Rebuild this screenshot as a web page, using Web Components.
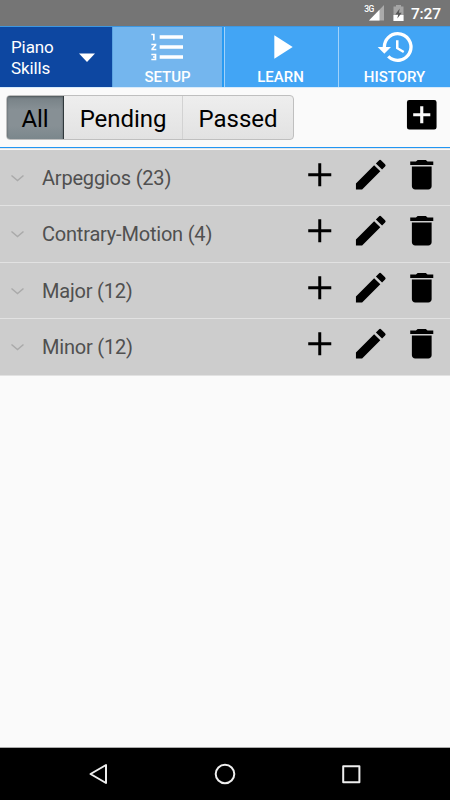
<!DOCTYPE html>
<html lang="en">
<head>
<meta charset="utf-8">
<meta name="viewport" content="width=device-width">
<title>Piano Skills</title>
<style>
  body {
    margin: 0;
    font-family: Roboto, sans-serif;
  }
</style>
</head>
<body>
<skills-app></skills-app>

<script>
const icons = {
  list: 'M2 17h2v.5H3v1h1v.5H2v1h3v-4H2v1zm1-9h1V4H2v1h1v3zm-1 3h1.800L2 13.100v.9h3v-1H3.200L5 10.900V10H2v1zm5-6v2h14V5H7zm0 14h14v-2H7v2zm0-6h14v-2H7v2z',
  play: 'M8 5v14l11-7z',
  history: 'M13 3a9 9 0 0 0-9 9H1l3.890 3.890.07.140L9 12H6a7 7 0 1 1 2.060 4.940l-1.420 1.420A9 9 0 1 0 13 3zm-1 5v5l4.280 2.540.720-1.210-3.500-2.080V8H12z',
  plus: 'M19 12.900h-6.100V19h-1.800v-6.100H5v-1.800h6.100V5h1.800v6.100H19z',
  pencil: 'M3 17.250V21h3.750L17.810 9.940l-3.750-3.750L3 17.250zM20.710 7.040a1 1 0 0 0 0-1.410l-2.340-2.340a1 1 0 0 0-1.410 0l-1.830 1.830 3.750 3.750 1.830-1.830z',
  trash: 'M6 19c0 1.100.9 2 2 2h8c1.100 0 2-.9 2-2V7H6v12zM19 4h-3.500l-1-1h-5l-1 1H5v2h14V4z',
  box: 'M19.600 3H4.400A1.400 1.400 0 0 0 3 4.400v15.200A1.400 1.400 0 0 0 4.400 21h15.200a1.400 1.400 0 0 0 1.400-1.400V4.400A1.400 1.400 0 0 0 19.600 3zm-2.400 9.950h-4.250v4.250h-1.900v-4.250H6.800v-1.900h4.250V6.800h1.900v4.250h4.250z'
}

class AppIcon extends HTMLElement {
  constructor () {
    super()
    this.attachShadow({ mode: 'open' })
  }

  connectedCallback () {
    this.shadowRoot.innerHTML = `
      <style>
        :host { display: block; width: 39.500px; height: 39.500px; flex: none; }
        svg { display: block; width: 100%; height: 100%; fill: currentColor; }
      </style>
      <svg viewBox="0 0 24 24"><path d="${icons[this.getAttribute('name')]}"/></svg>
    `
  }
}
customElements.define('app-icon', AppIcon)

class StatusBar extends HTMLElement {
  constructor () {
    super()
    this.attachShadow({ mode: 'open' }).innerHTML = `
      <style>
        :host {
          align-items: center;
          background: #757575;
          box-sizing: border-box;
          color: #fff;
          display: flex;
          height: 26px;
          justify-content: flex-end;
          padding-right: 9px;
        }
        .net { font-size: 8.500px; font-weight: 500; letter-spacing: -.5px; margin: -8px -5px 0 0; z-index: 1; }
        .signal { width: 15px; height: 16px; }
        .battery { width: 11px; height: 16px; margin: 0 7px 0 9px; }
        .time { font-size: 15.500px; font-weight: 500; letter-spacing: -.1px; line-height: 26px; margin-top: 2px; }
      </style>
      <span class="net">3G</span>
      <svg class="signal" viewBox="0 0 15 16">
        <path d="M15 0v15.500H0z" fill="#aaa"/>
        <path d="M10.500 4.700v10.800H0z" fill="#fff"/>
      </svg>
      <svg class="battery" viewBox="0 0 11 16">
        <path d="M3 0h5v1.500h2.500V16H.5V1.500H3z" fill="#a5a5a5"/>
        <path d="M.5 10h10v6H.5z" fill="#fff"/>
        <path d="M6.700 3.500 2.300 9.500h2.900L4.300 13.500 8.700 7.800H5.900z" fill="#555"/>
      </svg>
      <span class="time">7:27</span>
    `
  }
}
customElements.define('status-bar', StatusBar)

class NavTab extends HTMLElement {
  constructor () {
    super()
    this.attachShadow({ mode: 'open' })
  }

  connectedCallback () {
    this.shadowRoot.innerHTML = `
      <style>
        :host {
          align-items: center;
          background: #42a5f5;
          box-sizing: border-box;
          color: #fff;
          display: flex;
          flex-direction: column;
          font-size: 15px;
          font-weight: 500;
          line-height: 20px;
        }
        :host([active]) { background: #74b6ee; }
        app-icon { width: 40px; height: 40px; margin-top: -.5px; }
        :host([icon=history]) app-icon { margin-left: 2px; }
      </style>
      <app-icon name="${this.getAttribute('icon')}"></app-icon>
      <span><slot></slot></span>
    `
  }
}
customElements.define('nav-tab', NavTab)

class TopNav extends HTMLElement {
  constructor () {
    super()
    this.attachShadow({ mode: 'open' }).innerHTML = `
      <style>
        :host {
          background: #42a5f5;
          border-top: 1px solid #3f97df;
          box-sizing: border-box;
          display: grid;
          grid-template-columns: 112px 112px 114px 112px;
          height: 61px;
        }
        .course {
          align-items: center;
          background: #0d47a1;
          color: #fff;
          display: flex;
          font-size: 17px;
          justify-content: space-between;
          line-height: 20.500px;
          padding: 1px 16px 0 11px;
        }
        .course span { letter-spacing: -.1px; }
        .course svg { width: 18px; height: 10px; }
        nav-tab:nth-of-type(1) { border-left: 1px solid #5da4e1; border-right: 2px solid #279af2; }
        nav-tab:nth-of-type(2) { border-left: 1px solid #a1d2fa; padding-right: 2px; }
        nav-tab:nth-of-type(3) { border-left: 1px solid #a1d2fa; }
      </style>
      <div class="course">
        <span>Piano<br>Skills</span>
        <svg viewBox="0 0 18 10"><path d="M1 .5h16L9 9z" fill="#fff"/></svg>
      </div>
      <nav-tab icon="list" active>SETUP</nav-tab>
      <nav-tab icon="play">LEARN</nav-tab>
      <nav-tab icon="history">HISTORY</nav-tab>
    `
  }
}
customElements.define('top-nav', TopNav)

class FilterBar extends HTMLElement {
  constructor () {
    super()
    this.attachShadow({ mode: 'open' }).innerHTML = `
      <style>
        :host {
          align-items: flex-start;
          border-bottom: 1px solid #2196f3;
          border-top: 1px solid #d8ebfb;
          box-sizing: border-box;
          display: flex;
          height: 61px;
          justify-content: space-between;
          padding: 7px 9px 0 6px;
        }
        .group {
          background: linear-gradient(#eee, #e2e2e2);
          border: 1px solid #bfbfbf;
          border-radius: 4px;
          box-sizing: border-box;
          color: #000;
          display: grid;
          font-size: 24px;
          grid-template-columns: 57px 119px 110px;
          height: 45px;
          letter-spacing: -.05px;
          line-height: 46px;
          overflow: hidden;
          text-align: center;
          width: 288px;
        }
        .group span + span { border-right: 1px solid #d2d2d2; }
        .group span:last-child { border: 0; }
        .on {
          background: linear-gradient(#768085, #879095 30%, #879095 65%, #78858a);
          border-right: 1px solid #30383b;
          box-shadow: inset 0 1px 2px #4e5659;
        }
      </style>
      <div class="group"><span class="on">All</span><span>Pending</span><span>Passed</span></div>
      <app-icon name="box"></app-icon>
    `
  }
}
customElements.define('filter-bar', FilterBar)

class SkillRow extends HTMLElement {
  constructor () {
    super()
    this.attachShadow({ mode: 'open' }).innerHTML = `
      <style>
        :host {
          align-items: center;
          background: #cdcdcd;
          border-bottom: 1px solid #e2e2e2;
          box-sizing: border-box;
          color: #505050;
          display: flex;
          font-size: 20px;
          height: 56.500px;
          padding: 0 9px 0 10px;
        }
        .chevron { width: 15px; height: 8px; margin-top: 1px; }
        .label { flex: 1; letter-spacing: -.2px; padding: 1px 0 0 17px; }
        .actions { color: #000; display: flex; gap: 11.200px; margin-top: -6px; }
      </style>
      <svg class="chevron" viewBox="0 0 15 8"><path d="M1.500 1.500 7.500 6.500l6-5" fill="none" stroke="#aaa" stroke-width="1.500"/></svg>
      <span class="label"><slot></slot></span>
      <div class="actions">
        <app-icon name="plus"></app-icon>
        <app-icon name="pencil"></app-icon>
        <app-icon name="trash"></app-icon>
      </div>
    `
  }
}
customElements.define('skill-row', SkillRow)

class SystemNav extends HTMLElement {
  constructor () {
    super()
    this.attachShadow({ mode: 'open' }).innerHTML = `
      <style>
        :host {
          align-items: center;
          background: #000;
          border-top: 1px solid #aaa;
          box-sizing: border-box;
          display: flex;
          height: 53px;
          justify-content: space-between;
          padding: 0 87px;
        }
        svg { width: 24px; height: 24px; fill: none; stroke: #eee; stroke-width: 2; stroke-linejoin: round; }
      </style>
      <svg viewBox="0 0 24 24"><path d="M19 3v18L3.500 12z"/></svg>
      <svg viewBox="0 0 24 24"><circle cx="12" cy="12" r="9.300"/></svg>
      <svg viewBox="0 0 24 24"><path d="M4.200 4.200h16.200v16H4.200z"/></svg>
    `
  }
}
customElements.define('system-nav', SystemNav)

class SkillsApp extends HTMLElement {
  constructor () {
    super()
    this.attachShadow({ mode: 'open' }).innerHTML = `
      <style>
        :host {
          background: #fafafa;
          display: flex;
          flex-direction: column;
          height: 800px;
          overflow: hidden;
          width: 450px;
        }
        main { border-top: 1px solid #e5e5e5; flex: 1; padding-top: .5px; }
      </style>
      <status-bar></status-bar>
      <top-nav></top-nav>
      <filter-bar></filter-bar>
      <main>
        <skill-row>Arpeggios (23)</skill-row>
        <skill-row>Contrary-Motion (4)</skill-row>
        <skill-row>Major (12)</skill-row>
        <skill-row>Minor (12)</skill-row>
      </main>
      <system-nav></system-nav>
    `
  }
}
customElements.define('skills-app', SkillsApp)
</script>
</body>
</html>
